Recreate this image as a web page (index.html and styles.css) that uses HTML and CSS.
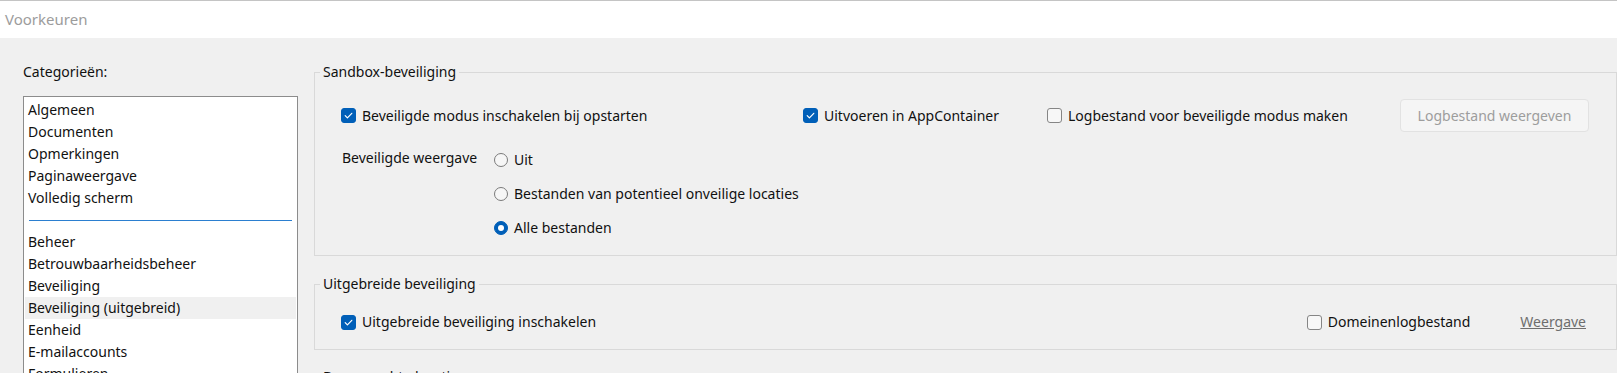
FILE: index.html
```html
<!DOCTYPE html>
<html lang="nl">
<head>
    <meta charset="UTF-8">
    <title>Voorkeuren</title>
    <link rel="stylesheet" href="styles.css">
</head>
<body>
    <div class="titlebar">Voorkeuren</div>

    <div class="main">
        <div class="sidebar">
            <div class="cat-label">Categorieën:</div>
            <div class="listbox">
                <div class="list-item">Algemeen</div>
                <div class="list-item">Documenten</div>
                <div class="list-item">Opmerkingen</div>
                <div class="list-item">Paginaweergave</div>
                <div class="list-item">Volledig scherm</div>
                <div class="list-sep"><span></span></div>
                <div class="list-item">Beheer</div>
                <div class="list-item">Betrouwbaarheidsbeheer</div>
                <div class="list-item">Beveiliging</div>
                <div class="list-item selected">Beveiliging (uitgebreid)</div>
                <div class="list-item">Eenheid</div>
                <div class="list-item">E-mailaccounts</div>
                <div class="list-item">Formulieren</div>
            </div>
        </div>

        <div class="content">
            <!-- Sandbox -->
            <fieldset class="group group-sandbox">
                <legend>Sandbox-beveiliging</legend>
                <div class="row row-top">
                    <label class="check col-a">
                        <span class="box checked"><svg width="15" height="15" viewBox="0 0 15 15"><path d="M4.2 7.6 L6.4 9.8 L10.8 5.3" fill="none" stroke="#fff" stroke-width="1.2" stroke-linecap="round" stroke-linejoin="round"/></svg></span>
                        Beveiligde modus inschakelen bij opstarten
                    </label>
                    <label class="check col-b">
                        <span class="box checked"><svg width="15" height="15" viewBox="0 0 15 15"><path d="M4.2 7.6 L6.4 9.8 L10.8 5.3" fill="none" stroke="#fff" stroke-width="1.2" stroke-linecap="round" stroke-linejoin="round"/></svg></span>
                        Uitvoeren in AppContainer
                    </label>
                    <label class="check col-c">
                        <span class="box"></span>
                        Logbestand voor beveiligde modus maken
                    </label>
                    <button class="btn" disabled>Logbestand weergeven</button>
                </div>
                <div class="row row-view">
                    <div class="view-label">Beveiligde weergave</div>
                    <div class="radios">
                        <label class="radio-item"><span class="radio"></span>Uit</label>
                        <label class="radio-item"><span class="radio"></span>Bestanden van potentieel onveilige locaties</label>
                        <label class="radio-item"><span class="radio checked"></span>Alle bestanden</label>
                    </div>
                </div>
            </fieldset>

            <!-- Uitgebreid -->
            <fieldset class="group group-enhanced">
                <legend>Uitgebreide beveiliging</legend>
                <div class="row row-enhanced">
                    <label class="check">
                        <span class="box checked"><svg width="15" height="15" viewBox="0 0 15 15"><path d="M4.2 7.6 L6.4 9.8 L10.8 5.3" fill="none" stroke="#fff" stroke-width="1.2" stroke-linecap="round" stroke-linejoin="round"/></svg></span>
                        Uitgebreide beveiliging inschakelen
                    </label>
                    <div class="row-right">
                        <label class="check">
                            <span class="box"></span>
                            Domeinenlogbestand
                        </label>
                        <a class="link" href="#">Weergave</a>
                    </div>
                </div>
            </fieldset>

            <fieldset class="group group-next">
                <legend>Bevoorrechte locaties</legend>
            </fieldset>
        </div>
    </div>
</body>
</html>
```

FILE: styles.css
```css
html, body {
    margin: 0;
    padding: 0;
    height: 100%;
    overflow: hidden;
}

body {
    font-family: "Noto Sans", "Open Sans", sans-serif;
    font-size: 14px;
    line-height: 20px;
    color: #111;
    background-color: #f0f0f0;
}

/* Title bar */
.titlebar {
    height: 37px;
    border-top: 1px solid #c4c4c4;
    background: #fff;
    color: #9c9c9c;
    font-size: 15px;
    line-height: 37px;
    padding-left: 5px;
}

.main {
    display: flex;
    padding-top: 24px;
}

/* Category list */
.sidebar {
    width: 275px;
    margin-left: 23px;
    flex-shrink: 0;
}

.cat-label {
    line-height: 20px;
}

.listbox {
    margin-top: 14px;
    height: 400px;
    border: 1px solid #8c8c8c;
    background: #fff;
    padding: 2px 1px 0;
}

.list-item {
    height: 22px;
    line-height: 22px;
    padding-left: 3px;
    white-space: nowrap;
}

.list-item.selected {
    background: #f0f0f0;
}

.list-sep {
    height: 22px;
    display: flex;
    align-items: center;
    padding: 0 4px;
}

.list-sep span {
    flex: 1;
    height: 1px;
    background: #2b7fd0;
    margin-top: 1px;
}

/* Right column */
.content {
    flex: 1;
    margin-left: 16px;
    min-width: 0;
}

.group {
    margin: 0;
    border: 1px solid #d9d9d9;
    padding: 0 27px 0 26px;
    min-width: 0;
}

.group legend {
    padding: 0 3px;
    margin-left: -21px;
    line-height: 20px;
    font-size: 14px;
}

.group + .group {
    margin-top: 18px;
}

.row {
    display: flex;
    align-items: center;
}

.row-top {
    margin-top: 17px;
    height: 33px;
}

.col-a { width: 462px; }
.col-b { width: 244px; }
.col-c { flex: 1; }

.group-sandbox {
    padding-bottom: 10px;
}

.row-view {
    align-items: flex-start;
    margin-top: 11px;
}

.view-label {
    width: 152px;
    line-height: 34px;
    margin-top: -2px;
    padding-left: 1px;
}

.radios {
    display: flex;
    flex-direction: column;
}

.radio-item {
    display: flex;
    align-items: center;
    height: 34px;
    gap: 6px;
}

.radio {
    width: 14px;
    height: 14px;
    border: 1px solid #7a7a7a;
    border-radius: 50%;
    background: #f6f6f6;
    box-sizing: border-box;
    display: flex;
    align-items: center;
    justify-content: center;
}

.radio.checked {
    background: #005fb8;
    border-color: #005fb8;
}

.radio.checked::after {
    content: "";
    width: 6px;
    height: 6px;
    border-radius: 50%;
    background: #fff;
}

/* Checkboxes */
.check {
    display: flex;
    align-items: center;
    gap: 6px;
    white-space: nowrap;
}

.box {
    width: 15px;
    height: 15px;
    box-sizing: border-box;
    border: 1px solid #858585;
    border-radius: 3px;
    background: #f7f7f7;
    display: flex;
    flex-shrink: 0;
}

.box.checked {
    background: #005fb8;
    border-color: #005fb8;
}

.box svg {
    margin: -1px;
}

.btn {
    width: 189px;
    height: 33px;
    border: 1px solid #e2e2e2;
    border-radius: 4px;
    background: #f5f5f5;
    color: #9d9d9d;
    font-family: inherit;
    font-size: 14px;
    padding: 0;
}

/* Enhanced security */
.group-enhanced {
    padding-bottom: 16px;
}

.row-enhanced {
    margin-top: 17px;
    height: 22px;
    padding-right: 3px;
}

.row-right {
    margin-left: auto;
    display: flex;
    align-items: center;
}

.link {
    color: #6e6e6e;
    text-decoration: underline;
    margin-left: 50px;
}

.group + .group-next {
    margin-top: 17px;
    height: 60px;
}
```
